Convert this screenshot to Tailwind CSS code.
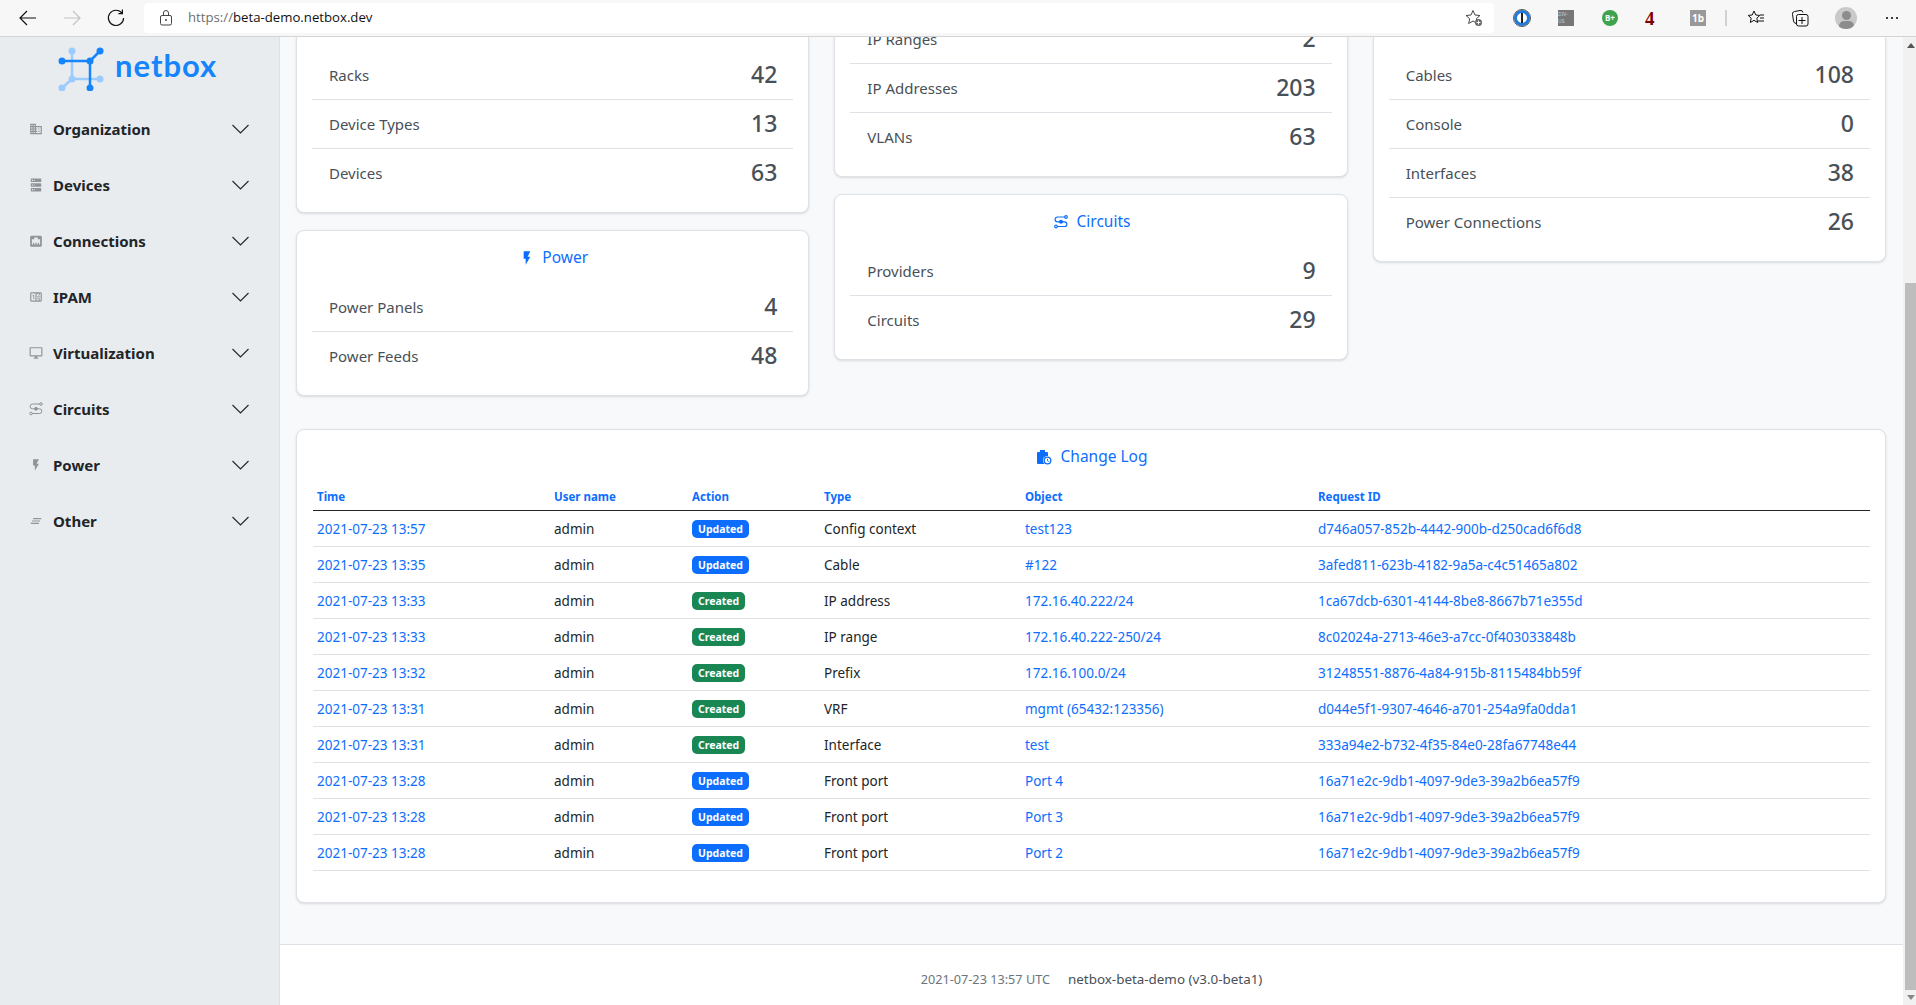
<!DOCTYPE html>
<html lang="en">
<head>
  <meta charset="UTF-8">
  <title>NetBox Home</title>
  <script src="https://cdn.jsdelivr.net/npm/@tailwindcss/browser@4"></script>
</head>
<body class="h-screen overflow-hidden bg-white font-['Noto_Sans',sans-serif] text-[15px] text-[#212529]">

  <!-- browser toolbar -->
  <div class="relative z-10 flex h-[37px] items-center border-b border-[#d4d4d4] bg-[#f7f7f7]">
    <div class="flex w-[144px] items-center pl-[18px] gap-[24px]">
      <svg class="h-[20px] w-[20px] shrink-0" viewBox="0 0 20 20" fill="none" stroke="#111" stroke-width="1.2"><path d="M18 10H2M9 3l-7 7 7 7"/></svg>
      <svg class="h-[20px] w-[20px] shrink-0" viewBox="0 0 20 20" fill="none" stroke="#c4c4c4" stroke-width="1.2"><path d="M2 10h16M11 3l7 7-7 7"/></svg>
      <svg class="h-[20px] w-[20px] shrink-0" viewBox="0 0 20 20" fill="none" stroke="#111" stroke-width="1.2"><path d="M16 5.2A7.6 7.6 0 1 0 17.6 10M16.4 1.6v4h-4"/></svg>
    </div>
    <div class="flex h-[30px] w-[1350px] items-center rounded-[4px] bg-white pl-[15px]">
      <svg class="h-[16px] w-[14px] shrink-0" viewBox="0 0 14 16" fill="none" stroke="#444" stroke-width="1"><rect x="1.5" y="5.5" width="11" height="9.5" rx="1.5"/><path d="M4.5 5.500V3a2.500 2.500 0 0 1 5 0v2.500"/><circle cx="7" cy="10" r="1" fill="#444" stroke="none"/></svg>
      <span class="ml-[15px] font-['Open_Sans',sans-serif] text-[13.2px]"><span class="text-[#6e6e6e]">https://</span><span class="text-[#111]">beta-demo.netbox.dev</span></span>
      <svg class="ml-auto mr-[11px] h-[18px] w-[18px]" viewBox="0 0 18 18" fill="none" stroke="#444" stroke-width="1"><path d="M8 1.500l2 4.500 5 .5-3.700 3.300 1 4.700L8 12l-4.300 2.500 1-4.700L1 6.500 6 6z"/><circle cx="13.500" cy="13.500" r="3.500" fill="#666" stroke="none"/><path d="M13.500 11.500v4M11.500 13.500h4" stroke="#fff"/></svg>
    </div>
    <div class="relative flex-1">
      <div class="absolute left-[20px] top-[-8px] h-[16px] w-[16px] rounded-full border-[3px] border-[#1f7ae0] bg-white outline outline-1 outline-[#555]"><div class="mx-auto h-full w-[2px] bg-[#222]"></div></div>
      <div class="absolute left-[64px] top-[-8px] flex h-[16px] w-[16px] items-center justify-center overflow-hidden bg-[#777] text-[5px] text-[#ccc]">DIV-US</div>
      <div class="absolute left-[108px] top-[-8px] flex h-[16px] w-[16px] items-center justify-center rounded-full bg-[#3fa34d] text-[8px] font-bold text-white">B+</div>
      <div class="absolute left-[151px] top-[-13px] font-['Liberation_Serif',serif] text-[19px] font-bold text-[#800000]">4</div>
      <div class="absolute left-[196px] top-[-8px] flex h-[16px] w-[16px] items-center justify-center bg-[#999] text-[10px] font-bold text-white">1b</div>
      <div class="absolute left-[231px] top-[-8px] h-[16px] w-[2px] bg-[#d0d0d0]"></div>
      <svg class="absolute left-[253px] top-[-9px] h-[18px] w-[18px]" viewBox="0 0 18 18" fill="none" stroke="#111" stroke-width="1"><path d="M7 2l1.800 4 4 .4-3 2.800.9 4.300L7 11.300l-3.700 2.200.9-4.300-3-2.800 4-.4zM13 6h4M13 9h4M11 12h6"/></svg>
      <svg class="absolute left-[297px] top-[-9px] h-[18px] w-[18px]" viewBox="0 0 18 18" fill="none" stroke="#111" stroke-width="1"><rect x="5.500" y="5.500" width="11.500" height="11.500" rx="2"/><path d="M11 8v7M7.500 11.500h7M5 14.500A3 3 0 0 1 2.500 12L1.500 5.500A2.500 2.500 0 0 1 3.500 2.500L9 1.500A2.500 2.500 0 0 1 12 3.500"/></svg>
      <div class="absolute left-[341px] top-[-11px] h-[22px] w-[22px] overflow-hidden rounded-full bg-[#c9c9c9]"><div class="mx-auto mt-[4px] h-[9px] w-[9px] rounded-full bg-[#8c8c8c]"></div><div class="mx-auto mt-[1px] h-[10px] w-[15px] rounded-full bg-[#8c8c8c]"></div></div>
      <svg class="absolute left-[391px] top-[-2px] h-[4px] w-[14px]" viewBox="0 0 14 4" fill="#111"><circle cx="2" cy="2" r="1.100"/><circle cx="7" cy="2" r="1.100"/><circle cx="12" cy="2" r="1.100"/></svg>
    </div>
  </div>

  <div class="flex h-[968px]">
    <!-- sidebar -->
    <aside class="w-[280px] shrink-0 border-r border-[#dee2e6] bg-[#e9ecef]">
      <div class="flex h-[64px] items-start pl-[58px] pt-[10px]">
        <svg class="h-[44px] w-[46px]" viewBox="58 46 46 44" fill="none">
          <path d="M72 50v28h28M72 78L62 87" stroke="#9ccbff" stroke-width="2.500"/>
          <g fill="#9ccbff"><circle cx="72" cy="50" r="3.500"/><circle cx="72" cy="78" r="3.500"/><circle cx="100" cy="78" r="3.500"/><circle cx="62" cy="87" r="3.500"/></g>
          <path d="M62 60h28v27M90 60l10-10" stroke="#1685fc" stroke-width="2.500"/>
          <g fill="#1685fc"><circle cx="62" cy="60" r="3.500"/><circle cx="90" cy="60" r="3.500"/><circle cx="100" cy="50" r="3.500"/><circle cx="90" cy="87" r="3.500"/></g>
        </svg>
        <span class="ml-[11px] -mt-[2px] font-['Lato',sans-serif] text-[31px] font-bold leading-[40px] tracking-[1px] text-[#1685fc]">netbox</span>
      </div>
      <nav class="text-[15px] font-bold text-[#212529]">
        <div class="flex h-[56px] items-center pl-[29px] pr-[30px]">
          <svg class="h-[14px] w-[14px]" viewBox="0 0 24 24" fill="#8f9499"><path d="M18,15H16V17H18M18,11H16V13H18M20,19H12V17H14V15H12V13H14V11H12V9H20M10,7H8V5H10M10,11H8V9H10M10,15H8V13H10M10,19H8V17H10M6,7H4V5H6M6,11H4V9H6M6,15H4V13H6M6,19H4V17H6M12,7V3H2V21H22V7H12Z"/></svg>
          <span class="ml-[10px]">Organization</span>
          <svg class="ml-auto h-[10px] w-[17px]" viewBox="0 0 17 10" fill="none" stroke="#212529" stroke-width="1.100"><path d="M.5 1l8 8 8-8"/></svg>
        </div>
        <div class="flex h-[56px] items-center pl-[29px] pr-[30px]">
          <svg class="h-[14px] w-[14px]" viewBox="0 0 24 24" fill="#8f9499"><path d="M4,1H20A1,1 0 0,1 21,2V6A1,1 0 0,1 20,7H4A1,1 0 0,1 3,6V2A1,1 0 0,1 4,1M4,9H20A1,1 0 0,1 21,10V14A1,1 0 0,1 20,15H4A1,1 0 0,1 3,14V10A1,1 0 0,1 4,9M4,17H20A1,1 0 0,1 21,18V22A1,1 0 0,1 20,23H4A1,1 0 0,1 3,22V18A1,1 0 0,1 4,17M9,5H10V3H9V5M9,13H10V11H9V13M9,21H10V19H9V21M5,3V5H7V3H5M5,11V13H7V11H5M5,19V21H7V19H5Z"/></svg>
          <span class="ml-[10px]">Devices</span>
          <svg class="ml-auto h-[10px] w-[17px]" viewBox="0 0 17 10" fill="none" stroke="#212529" stroke-width="1.100"><path d="M.5 1l8 8 8-8"/></svg>
        </div>
        <div class="flex h-[56px] items-center pl-[29px] pr-[30px]">
          <svg class="h-[14px] w-[14px]" viewBox="0 0 24 24" fill="#8f9499"><path d="M7,15H9V18H11V15H13V18H15V15H17V18H19V9H15V6H9V9H5V18H7V15M4.380,3H19.630C20.940,3 22,4.060 22,5.380V19.630A2.370,2.370 0 0,1 19.630,22H4.380C3.060,22 2,20.940 2,19.630V5.380C2,4.060 3.060,3 4.380,3Z"/></svg>
          <span class="ml-[10px]">Connections</span>
          <svg class="ml-auto h-[10px] w-[17px]" viewBox="0 0 17 10" fill="none" stroke="#212529" stroke-width="1.100"><path d="M.5 1l8 8 8-8"/></svg>
        </div>
        <div class="flex h-[56px] items-center pl-[29px] pr-[30px]">
          <svg class="h-[14px] w-[14px]" viewBox="0 0 24 24" fill="#8f9499"><path d="M4,4H20A2,2 0 0,1 22,6V18A2,2 0 0,1 20,20H4A2,2 0 0,1 2,18V6A2,2 0 0,1 4,4M4,6V18H11V6H4M20,18V6H18.760C19,6.540 18.950,7.070 18.950,7.130C18.880,7.800 18.410,8.500 18.240,8.750L15.910,11.300L19.230,11.280L19.240,12.500L14.040,12.470L14,11.470C14,11.470 17.050,8.240 17.200,7.950C17.340,7.670 17.910,6 16.500,6C15.270,6.050 15.410,7.300 15.410,7.300L13.870,7.310C13.870,7.310 13.880,6.650 14.250,6H13V18H15.580L15.570,17.140L16.540,17.130C16.540,17.130 17.450,16.970 17.460,16.080C17.500,15.080 16.650,15.080 16.500,15.080C16.370,15.080 15.430,15.130 15.430,15.950H13.910C13.910,15.950 13.950,13.890 16.500,13.890C19.100,13.890 18.960,15.910 18.960,15.910C18.960,15.910 19,17.160 17.850,17.630L18.370,18H20M8.920,16H7.420V10.200L5.620,10.760V9.530L8.760,8.410H8.920V16Z"/></svg>
          <span class="ml-[10px]">IPAM</span>
          <svg class="ml-auto h-[10px] w-[17px]" viewBox="0 0 17 10" fill="none" stroke="#212529" stroke-width="1.100"><path d="M.5 1l8 8 8-8"/></svg>
        </div>
        <div class="flex h-[56px] items-center pl-[29px] pr-[30px]">
          <svg class="h-[14px] w-[14px]" viewBox="0 0 24 24" fill="#8f9499"><path d="M21,16H3V4H21M21,2H3C1.890,2 1,2.890 1,4V16A2,2 0 0,0 3,18H10V20H8V22H16V20H14V18H21A2,2 0 0,0 23,16V4C23,2.890 22.100,2 21,2Z"/></svg>
          <span class="ml-[10px]">Virtualization</span>
          <svg class="ml-auto h-[10px] w-[17px]" viewBox="0 0 17 10" fill="none" stroke="#212529" stroke-width="1.100"><path d="M.5 1l8 8 8-8"/></svg>
        </div>
        <div class="flex h-[56px] items-center pl-[29px] pr-[30px]">
          <svg class="h-[14px] w-[14px]" viewBox="0 0 14 14" fill="none" stroke="#8f9499" stroke-width="1"><path d="M11 2H3.500a2 2 0 0 0 0 4.800h7a2.200 2.200 0 0 1 0 4.700H3"/><circle cx="12" cy="2" r="1.300"/><circle cx="2" cy="11.500" r="1.300"/><circle cx="7" cy="6.800" r="1.400" fill="#8f9499"/></svg>
          <span class="ml-[10px]">Circuits</span>
          <svg class="ml-auto h-[10px] w-[17px]" viewBox="0 0 17 10" fill="none" stroke="#212529" stroke-width="1.100"><path d="M.5 1l8 8 8-8"/></svg>
        </div>
        <div class="flex h-[56px] items-center pl-[29px] pr-[30px]">
          <svg class="h-[14px] w-[14px]" viewBox="0 0 24 24" fill="#8f9499"><path d="M7,2V13H10V22L17,10H13L17,2H7Z"/></svg>
          <span class="ml-[10px]">Power</span>
          <svg class="ml-auto h-[10px] w-[17px]" viewBox="0 0 17 10" fill="none" stroke="#212529" stroke-width="1.100"><path d="M.5 1l8 8 8-8"/></svg>
        </div>
        <div class="flex h-[56px] items-center pl-[29px] pr-[30px]">
          <svg class="h-[14px] w-[14px]" viewBox="0 0 24 24" fill="#8f9499"><path d="M5,13H19V11H5V13M3,17H17V15H3V17M7,7V9H21V7H7Z"/></svg>
          <span class="ml-[10px]">Other</span>
          <svg class="ml-auto h-[10px] w-[17px]" viewBox="0 0 17 10" fill="none" stroke="#212529" stroke-width="1.100"><path d="M.5 1l8 8 8-8"/></svg>
        </div>
      </nav>
    </aside>

    <!-- main -->
    <main class="flex min-w-0 flex-1 flex-col overflow-hidden bg-[#f8f9fa]">
      <div class="flex-1 pl-[16px] pr-[17px]">
        <div class="grid grid-cols-3 items-start gap-x-[25px]">
          <div class="flex flex-col gap-[17px]">
            <div class="rounded-b-[8px] border border-t-0 border-[#dee2e6] bg-white px-[15px] pb-[15px] pt-[14px] shadow-sm">
              <div class="flex h-[49px] items-center justify-between border-b border-[#dee2e6] pl-[17px] pr-[16px] text-[#495057]"><span>Racks</span><span class="-mt-[1px] text-[23px] font-medium">42</span></div>
              <div class="flex h-[49px] items-center justify-between border-b border-[#dee2e6] pl-[17px] pr-[16px] text-[#495057]"><span>Device Types</span><span class="-mt-[1px] text-[23px] font-medium">13</span></div>
              <div class="flex h-[48px] items-center justify-between pl-[17px] pr-[16px] text-[#495057]"><span>Devices</span><span class="-mt-[1px] text-[23px] font-medium">63</span></div>
            </div>
            <div class="rounded-[8px] border border-[#dee2e6] bg-white px-[15px] pb-[15px] shadow-sm">
              <div class="flex h-[52px] items-center justify-center pt-[2px] text-[15.500px] text-[#0d6efd]">
                <svg class="ml-[2px] mr-[7px] h-[16px] w-[16px]" viewBox="0 0 24 24" fill="#0d6efd"><path d="M7,2V13H10V22L17,10H13L17,2H7Z"/></svg>Power</div>
              <div class="flex h-[49px] items-center justify-between border-b border-[#dee2e6] pl-[17px] pr-[16px] text-[#495057]"><span>Power Panels</span><span class="-mt-[1px] text-[23px] font-medium">4</span></div>
              <div class="flex h-[48px] items-center justify-between pl-[17px] pr-[16px] text-[#495057]"><span>Power Feeds</span><span class="-mt-[1px] text-[23px] font-medium">48</span></div>
            </div>
          </div>
          <div class="flex flex-col gap-[17px]">
            <div class="-mt-[22px] rounded-b-[8px] border border-t-0 border-[#dee2e6] bg-white px-[15px] pb-[15px] shadow-sm">
              <div class="flex h-[49px] items-center justify-between border-b border-[#dee2e6] pl-[17px] pr-[16px] text-[#495057]"><span>IP Ranges</span><span class="-mt-[1px] text-[23px] font-medium">2</span></div>
              <div class="flex h-[49px] items-center justify-between border-b border-[#dee2e6] pl-[17px] pr-[16px] text-[#495057]"><span>IP Addresses</span><span class="-mt-[1px] text-[23px] font-medium">203</span></div>
              <div class="flex h-[48px] items-center justify-between pl-[17px] pr-[16px] text-[#495057]"><span>VLANs</span><span class="-mt-[1px] text-[23px] font-medium">63</span></div>
            </div>
            <div class="rounded-[8px] border border-[#dee2e6] bg-white px-[15px] pb-[15px] shadow-sm">
              <div class="flex h-[52px] items-center justify-center pl-[2px] pt-[2px] text-[15.500px] text-[#0d6efd]">
                <svg class="mr-[9px] h-[14px] w-[14px]" viewBox="0 0 14 14" fill="none" stroke="#0d6efd" stroke-width="1.200"><path d="M11 2H3.500a2 2 0 0 0 0 4.800h7a2.200 2.200 0 0 1 0 4.700H3"/><circle cx="12" cy="2" r="1.300"/><circle cx="2" cy="11.500" r="1.300"/><circle cx="7" cy="6.800" r="1.400" fill="#0d6efd"/></svg>Circuits</div>
              <div class="flex h-[49px] items-center justify-between border-b border-[#dee2e6] pl-[17px] pr-[16px] text-[#495057]"><span>Providers</span><span class="-mt-[1px] text-[23px] font-medium">9</span></div>
              <div class="flex h-[48px] items-center justify-between pl-[17px] pr-[16px] text-[#495057]"><span>Circuits</span><span class="-mt-[1px] text-[23px] font-medium">29</span></div>
            </div>
          </div>
          <div class="rounded-b-[8px] border border-t-0 border-[#dee2e6] bg-white px-[15px] pb-[15px] pt-[14px] shadow-sm">
            <div class="flex h-[49px] items-center justify-between border-b border-[#dee2e6] pl-[17px] pr-[16px] text-[#495057]"><span>Cables</span><span class="-mt-[1px] text-[23px] font-medium">108</span></div>
            <div class="flex h-[49px] items-center justify-between border-b border-[#dee2e6] pl-[17px] pr-[16px] text-[#495057]"><span>Console</span><span class="-mt-[1px] text-[23px] font-medium">0</span></div>
            <div class="flex h-[49px] items-center justify-between border-b border-[#dee2e6] pl-[17px] pr-[16px] text-[#495057]"><span>Interfaces</span><span class="-mt-[1px] text-[23px] font-medium">38</span></div>
            <div class="flex h-[48px] items-center justify-between pl-[17px] pr-[16px] text-[#495057]"><span>Power Connections</span><span class="-mt-[1px] text-[23px] font-medium">26</span></div>
          </div>
        </div>

        <!-- change log -->
        <div class="mt-[33px] h-[474px] rounded-[8px] border border-[#dee2e6] bg-white pl-[16px] pr-[15px] shadow-sm">
          <div class="flex h-[53px] items-center justify-center text-[15.500px] text-[#0d6efd]">
            <svg class="mr-[9px] h-[16px] w-[16px]" viewBox="0 0 16 16"><path fill="#0d6efd" d="M4 1h5v2h2a1 1 0 0 1 1 1v10a1 1 0 0 1-1 1H2a1 1 0 0 1-1-1V4a1 1 0 0 1 1-1h2z"/><circle cx="11.500" cy="11.500" r="4.500" fill="#fff"/><circle cx="11.500" cy="11.500" r="3.300" fill="none" stroke="#0d6efd" stroke-width="1.300"/><path d="M11.500 9.800v1.900l1.300.7" fill="none" stroke="#0d6efd"/></svg>Change Log</div>
          <table class="w-full table-fixed">
            <thead>
              <tr class="h-[27px] border-b border-[#212529] text-left text-[11.500px] font-bold text-[#0d6efd]">
                <th class="w-[237px] px-[4px]">Time</th>
                <th class="w-[138px] px-[4px]">User name</th>
                <th class="w-[132px] px-[4px]">Action</th>
                <th class="w-[201px] px-[4px]">Type</th>
                <th class="w-[293px] px-[4px]">Object</th>
                <th class="px-[4px]">Request ID</th>
              </tr>
            </thead>
            <tbody class="text-[13.500px] [&_td]:pt-[2px]">
              <tr class="h-[36px] border-b border-[#dee2e6]"><td class="px-[4px] text-[#0d6efd]">2021-07-23 13:57</td><td class="px-[4px]">admin</td><td class="px-[4px]"><span class="inline-block -translate-y-px rounded-[5px] bg-[#0d6efd] px-[6px] align-middle text-[10.500px] font-bold leading-[18px] text-white">Updated</span></td><td class="px-[4px]">Config context</td><td class="px-[4px] text-[#0d6efd]">test123</td><td class="px-[4px] text-[#0d6efd]">d746a057-852b-4442-900b-d250cad6f6d8</td></tr>
              <tr class="h-[36px] border-b border-[#dee2e6]"><td class="px-[4px] text-[#0d6efd]">2021-07-23 13:35</td><td class="px-[4px]">admin</td><td class="px-[4px]"><span class="inline-block -translate-y-px rounded-[5px] bg-[#0d6efd] px-[6px] align-middle text-[10.500px] font-bold leading-[18px] text-white">Updated</span></td><td class="px-[4px]">Cable</td><td class="px-[4px] text-[#0d6efd]">#122</td><td class="px-[4px] text-[#0d6efd]">3afed811-623b-4182-9a5a-c4c51465a802</td></tr>
              <tr class="h-[36px] border-b border-[#dee2e6]"><td class="px-[4px] text-[#0d6efd]">2021-07-23 13:33</td><td class="px-[4px]">admin</td><td class="px-[4px]"><span class="inline-block -translate-y-px rounded-[5px] bg-[#198754] px-[6px] align-middle text-[10.500px] font-bold leading-[18px] text-white">Created</span></td><td class="px-[4px]">IP address</td><td class="px-[4px] text-[#0d6efd]">172.16.40.222/24</td><td class="px-[4px] text-[#0d6efd]">1ca67dcb-6301-4144-8be8-8667b71e355d</td></tr>
              <tr class="h-[36px] border-b border-[#dee2e6]"><td class="px-[4px] text-[#0d6efd]">2021-07-23 13:33</td><td class="px-[4px]">admin</td><td class="px-[4px]"><span class="inline-block -translate-y-px rounded-[5px] bg-[#198754] px-[6px] align-middle text-[10.500px] font-bold leading-[18px] text-white">Created</span></td><td class="px-[4px]">IP range</td><td class="px-[4px] text-[#0d6efd]">172.16.40.222-250/24</td><td class="px-[4px] text-[#0d6efd]">8c02024a-2713-46e3-a7cc-0f403033848b</td></tr>
              <tr class="h-[36px] border-b border-[#dee2e6]"><td class="px-[4px] text-[#0d6efd]">2021-07-23 13:32</td><td class="px-[4px]">admin</td><td class="px-[4px]"><span class="inline-block -translate-y-px rounded-[5px] bg-[#198754] px-[6px] align-middle text-[10.500px] font-bold leading-[18px] text-white">Created</span></td><td class="px-[4px]">Prefix</td><td class="px-[4px] text-[#0d6efd]">172.16.100.0/24</td><td class="px-[4px] text-[#0d6efd]">31248551-8876-4a84-915b-8115484bb59f</td></tr>
              <tr class="h-[36px] border-b border-[#dee2e6]"><td class="px-[4px] text-[#0d6efd]">2021-07-23 13:31</td><td class="px-[4px]">admin</td><td class="px-[4px]"><span class="inline-block -translate-y-px rounded-[5px] bg-[#198754] px-[6px] align-middle text-[10.500px] font-bold leading-[18px] text-white">Created</span></td><td class="px-[4px]">VRF</td><td class="px-[4px] text-[#0d6efd]">mgmt (65432:123356)</td><td class="px-[4px] text-[#0d6efd]">d044e5f1-9307-4646-a701-254a9fa0dda1</td></tr>
              <tr class="h-[36px] border-b border-[#dee2e6]"><td class="px-[4px] text-[#0d6efd]">2021-07-23 13:31</td><td class="px-[4px]">admin</td><td class="px-[4px]"><span class="inline-block -translate-y-px rounded-[5px] bg-[#198754] px-[6px] align-middle text-[10.500px] font-bold leading-[18px] text-white">Created</span></td><td class="px-[4px]">Interface</td><td class="px-[4px] text-[#0d6efd]">test</td><td class="px-[4px] text-[#0d6efd]">333a94e2-b732-4f35-84e0-28fa67748e44</td></tr>
              <tr class="h-[36px] border-b border-[#dee2e6]"><td class="px-[4px] text-[#0d6efd]">2021-07-23 13:28</td><td class="px-[4px]">admin</td><td class="px-[4px]"><span class="inline-block -translate-y-px rounded-[5px] bg-[#0d6efd] px-[6px] align-middle text-[10.500px] font-bold leading-[18px] text-white">Updated</span></td><td class="px-[4px]">Front port</td><td class="px-[4px] text-[#0d6efd]">Port 4</td><td class="px-[4px] text-[#0d6efd]">16a71e2c-9db1-4097-9de3-39a2b6ea57f9</td></tr>
              <tr class="h-[36px] border-b border-[#dee2e6]"><td class="px-[4px] text-[#0d6efd]">2021-07-23 13:28</td><td class="px-[4px]">admin</td><td class="px-[4px]"><span class="inline-block -translate-y-px rounded-[5px] bg-[#0d6efd] px-[6px] align-middle text-[10.500px] font-bold leading-[18px] text-white">Updated</span></td><td class="px-[4px]">Front port</td><td class="px-[4px] text-[#0d6efd]">Port 3</td><td class="px-[4px] text-[#0d6efd]">16a71e2c-9db1-4097-9de3-39a2b6ea57f9</td></tr>
              <tr class="h-[36px] border-b border-[#dee2e6]"><td class="px-[4px] text-[#0d6efd]">2021-07-23 13:28</td><td class="px-[4px]">admin</td><td class="px-[4px]"><span class="inline-block -translate-y-px rounded-[5px] bg-[#0d6efd] px-[6px] align-middle text-[10.500px] font-bold leading-[18px] text-white">Updated</span></td><td class="px-[4px]">Front port</td><td class="px-[4px] text-[#0d6efd]">Port 2</td><td class="px-[4px] text-[#0d6efd]">16a71e2c-9db1-4097-9de3-39a2b6ea57f9</td></tr>
            </tbody>
          </table>
        </div>
      </div>
      <footer class="flex h-[61px] shrink-0 items-center justify-center gap-[18px] border-t border-[#dee2e6] bg-white pt-[9px] text-[13.400px]">
        <span class="text-[12.700px] text-[#6c757d]">2021-07-23 13:57 UTC</span>
        <span class="text-[#495057]">netbox-beta-demo (v3.0-beta1)</span>
      </footer>
    </main>

    <!-- page scrollbar -->
    <div class="flex w-[13px] shrink-0 flex-col items-center bg-[#f1f1f1] pl-[2px] text-[#666]">
      <div class="mt-[6px] h-0 w-0 border-x-[4px] border-b-[5px] border-x-transparent border-b-[#555]"></div>
      <div class="mt-[235px] w-full flex-1 bg-[#bdbdbd]"></div>
      <div class="my-[5px] h-0 w-0 border-x-[4px] border-t-[5px] border-x-transparent border-t-[#888]"></div>
    </div>
  </div>
</body>
</html>
